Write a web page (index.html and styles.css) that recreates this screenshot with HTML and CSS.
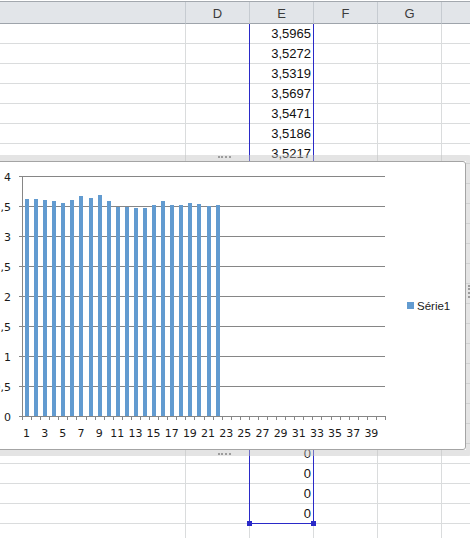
FILE: index.html
```html
<!DOCTYPE html>
<html lang="fr">
<head>
  <meta charset="utf-8">
  <meta name="viewport" content="width=device-width, initial-scale=1.0">
  <title>Feuille - graphique</title>
  <link rel="stylesheet" href="styles.css">
</head>
<body>

  <!-- Grid of cells -->
  <div class="sheet" id="sheet">
    <div class="row head">
      <div class="cell"></div>
      <div class="cell">D</div>
      <div class="cell">E</div>
      <div class="cell">F</div>
      <div class="cell">G</div>
      <div class="cell"></div>
    </div>
  </div>

  <!-- Selected range in column E -->
  <div class="selection">
    <span class="handle handle-left"></span>
    <span class="handle handle-right"></span>
  </div>

  <!-- Embedded chart -->
  <div class="chart">
    <span class="grip grip-top"></span>
    <span class="grip grip-bottom"></span>
    <span class="grip grip-right"></span>
    <div class="chart-area">
      <svg id="plot" width="464" height="287" viewBox="0 0 464 287"></svg>
    </div>
  </div>

  <script>
    // Values shown in column E (row number -> text)
    const cellValues = {
      1: '3,5965', 2: '3,5272', 3: '3,5319', 4: '3,5697',
      5: '3,5471', 6: '3,5186', 7: '3,5217',
      22: '0', 23: '0', 24: '0', 25: '0'
    };

    // Series plotted in the chart
    const series = [3.617, 3.617, 3.6, 3.583, 3.55, 3.6, 3.667, 3.633, 3.683, 3.583, 3.49,
                    3.49, 3.467, 3.467, 3.517, 3.583, 3.517, 3.517, 3.55, 3.533, 3.5, 3.517];

    // Build the rows
    const sheet = document.getElementById('sheet');
    for (let r = 1; r <= 26; r++) {
      const row = document.createElement('div');
      row.className = 'row';
      for (let c = 0; c < 6; c++) {
        const cell = document.createElement('div');
        cell.className = 'cell';
        if (c === 2 && cellValues[r]) cell.textContent = cellValues[r];
        row.appendChild(cell);
      }
      sheet.appendChild(row);
    }

    // Build the chart
    const NS = 'http://www.w3.org/2000/svg';
    const svg = document.getElementById('plot');
    const left = 22, right = 385, zeroY = 254, unit = 60;
    const step = (right - left) / 40;

    function add(tag, attrs, text) {
      const el = document.createElementNS(NS, tag);
      for (const key in attrs) el.setAttribute(key, attrs[key]);
      if (text) el.textContent = text;
      svg.appendChild(el);
      return el;
    }

    const yLabels = ['0', '0,5', '1', '1,5', '2', '2,5', '3', '3,5', '4'];
    yLabels.forEach((label, i) => {
      const y = zeroY - i * 30 + 0.5;
      add('line', { x1: 19, x2: right, y1: y, y2: y, class: 'grid' });
      add('text', { x: 11, y: y + 4, class: 'axis-label', 'text-anchor': 'end' }, label);
    });

    add('line', { x1: left + 0.5, x2: left + 0.5, y1: 14, y2: zeroY, class: 'grid' });

    for (let k = 0; k <= 40; k++) {
      const x = Math.round(left + k * step) + 0.5;
      add('line', { x1: x, x2: x, y1: zeroY, y2: zeroY + 4, class: 'grid' });
    }

    series.forEach((v, i) => {
      const cx = left + (i + 0.5) * step;
      const h = Math.round(v * unit);
      add('rect', { x: Math.round(cx - 1.5), y: zeroY - h, width: 4, height: h, class: 'bar' });
    });

    for (let i = 1; i <= 39; i += 2) {
      const cx = left + (i - 0.5) * step;
      add('text', { x: cx, y: 275, class: 'axis-label', 'text-anchor': 'middle' }, String(i));
    }

    // Legend
    add('rect', { x: 407, y: 140, width: 7, height: 7, class: 'bar' });
    add('text', { x: 417, y: 148, class: 'legend-label' }, 'Série1');
  </script>

</body>
</html>
```

FILE: styles.css
```css
/* Spreadsheet view */
html, body {
  margin: 0;
  padding: 0;
  overflow: hidden;
}

body {
  position: relative;
  width: 470px;
  height: 538px;
  background-color: #fff;
  font-family: "Liberation Sans", Arial, sans-serif;
}

.sheet {
  padding-top: 1px;
}

.row {
  display: grid;
  grid-template-columns: 186px 64px 64px 64px 64px 64px;
}

.cell {
  box-sizing: border-box;
  height: 20px;
  padding: 1px 2px 0 0;
  border-right: 1px solid #dadcdd;
  border-bottom: 1px solid #dadcdd;
  font-size: 13px;
  line-height: 18px;
  text-align: right;
  color: #111;
  white-space: nowrap;
}

.head {
  border-top: 1px solid #a3a8ae;
  background-color: #e2e5e9;
}

.head .cell {
  height: 22px;
  padding: 2px 0 0;
  border-right-color: #c6cbd1;
  border-bottom-color: #9ea4ab;
  line-height: 19px;
  text-align: center;
  color: #3c3c3c;
}

/* Selected range */
.selection {
  position: absolute;
  left: 249px;
  top: 24px;
  width: 65px;
  height: 500px;
  box-sizing: border-box;
  border: 1px solid #2a2ac8;
  border-top: none;
}

.handle {
  position: absolute;
  bottom: -3px;
  width: 5px;
  height: 5px;
  background-color: #2a2ac8;
}

.handle-left {
  left: -3px;
}

.handle-right {
  right: -3px;
}

/* Chart object */
.chart {
  position: absolute;
  left: -7px;
  top: 155px;
  width: 479px;
  height: 301px;
  box-sizing: border-box;
  border: 6px solid rgba(196, 196, 196, 0.45);
  border-radius: 4px;
}

.chart-area {
  height: 100%;
  box-sizing: border-box;
  border: 1px solid #a4a4a4;
  border-radius: 0 3px 3px 0;
  background-color: #fff;
}

.chart-area svg {
  display: block;
}

.grip {
  position: absolute;
  border-color: #9c9c9c;
  border-style: dotted;
  border-width: 0;
}

.grip-top {
  top: -5px;
  left: 219px;
  width: 13px;
  border-top-width: 2px;
}

.grip-bottom {
  bottom: -5px;
  left: 219px;
  width: 13px;
  border-bottom-width: 2px;
}

.grip-right {
  right: -4px;
  top: 124px;
  height: 13px;
  border-left-width: 2px;
}

.grid {
  stroke: #868686;
  stroke-width: 1;
}

.bar {
  fill: #629bd0;
}

.axis-label {
  font-family: "DejaVu Sans", Verdana, sans-serif;
  font-size: 11px;
  fill: #1a1a1a;
}

.legend-label {
  font-family: "Liberation Sans", Arial, sans-serif;
  font-size: 11.5px;
  fill: #1a1a1a;
}
```
